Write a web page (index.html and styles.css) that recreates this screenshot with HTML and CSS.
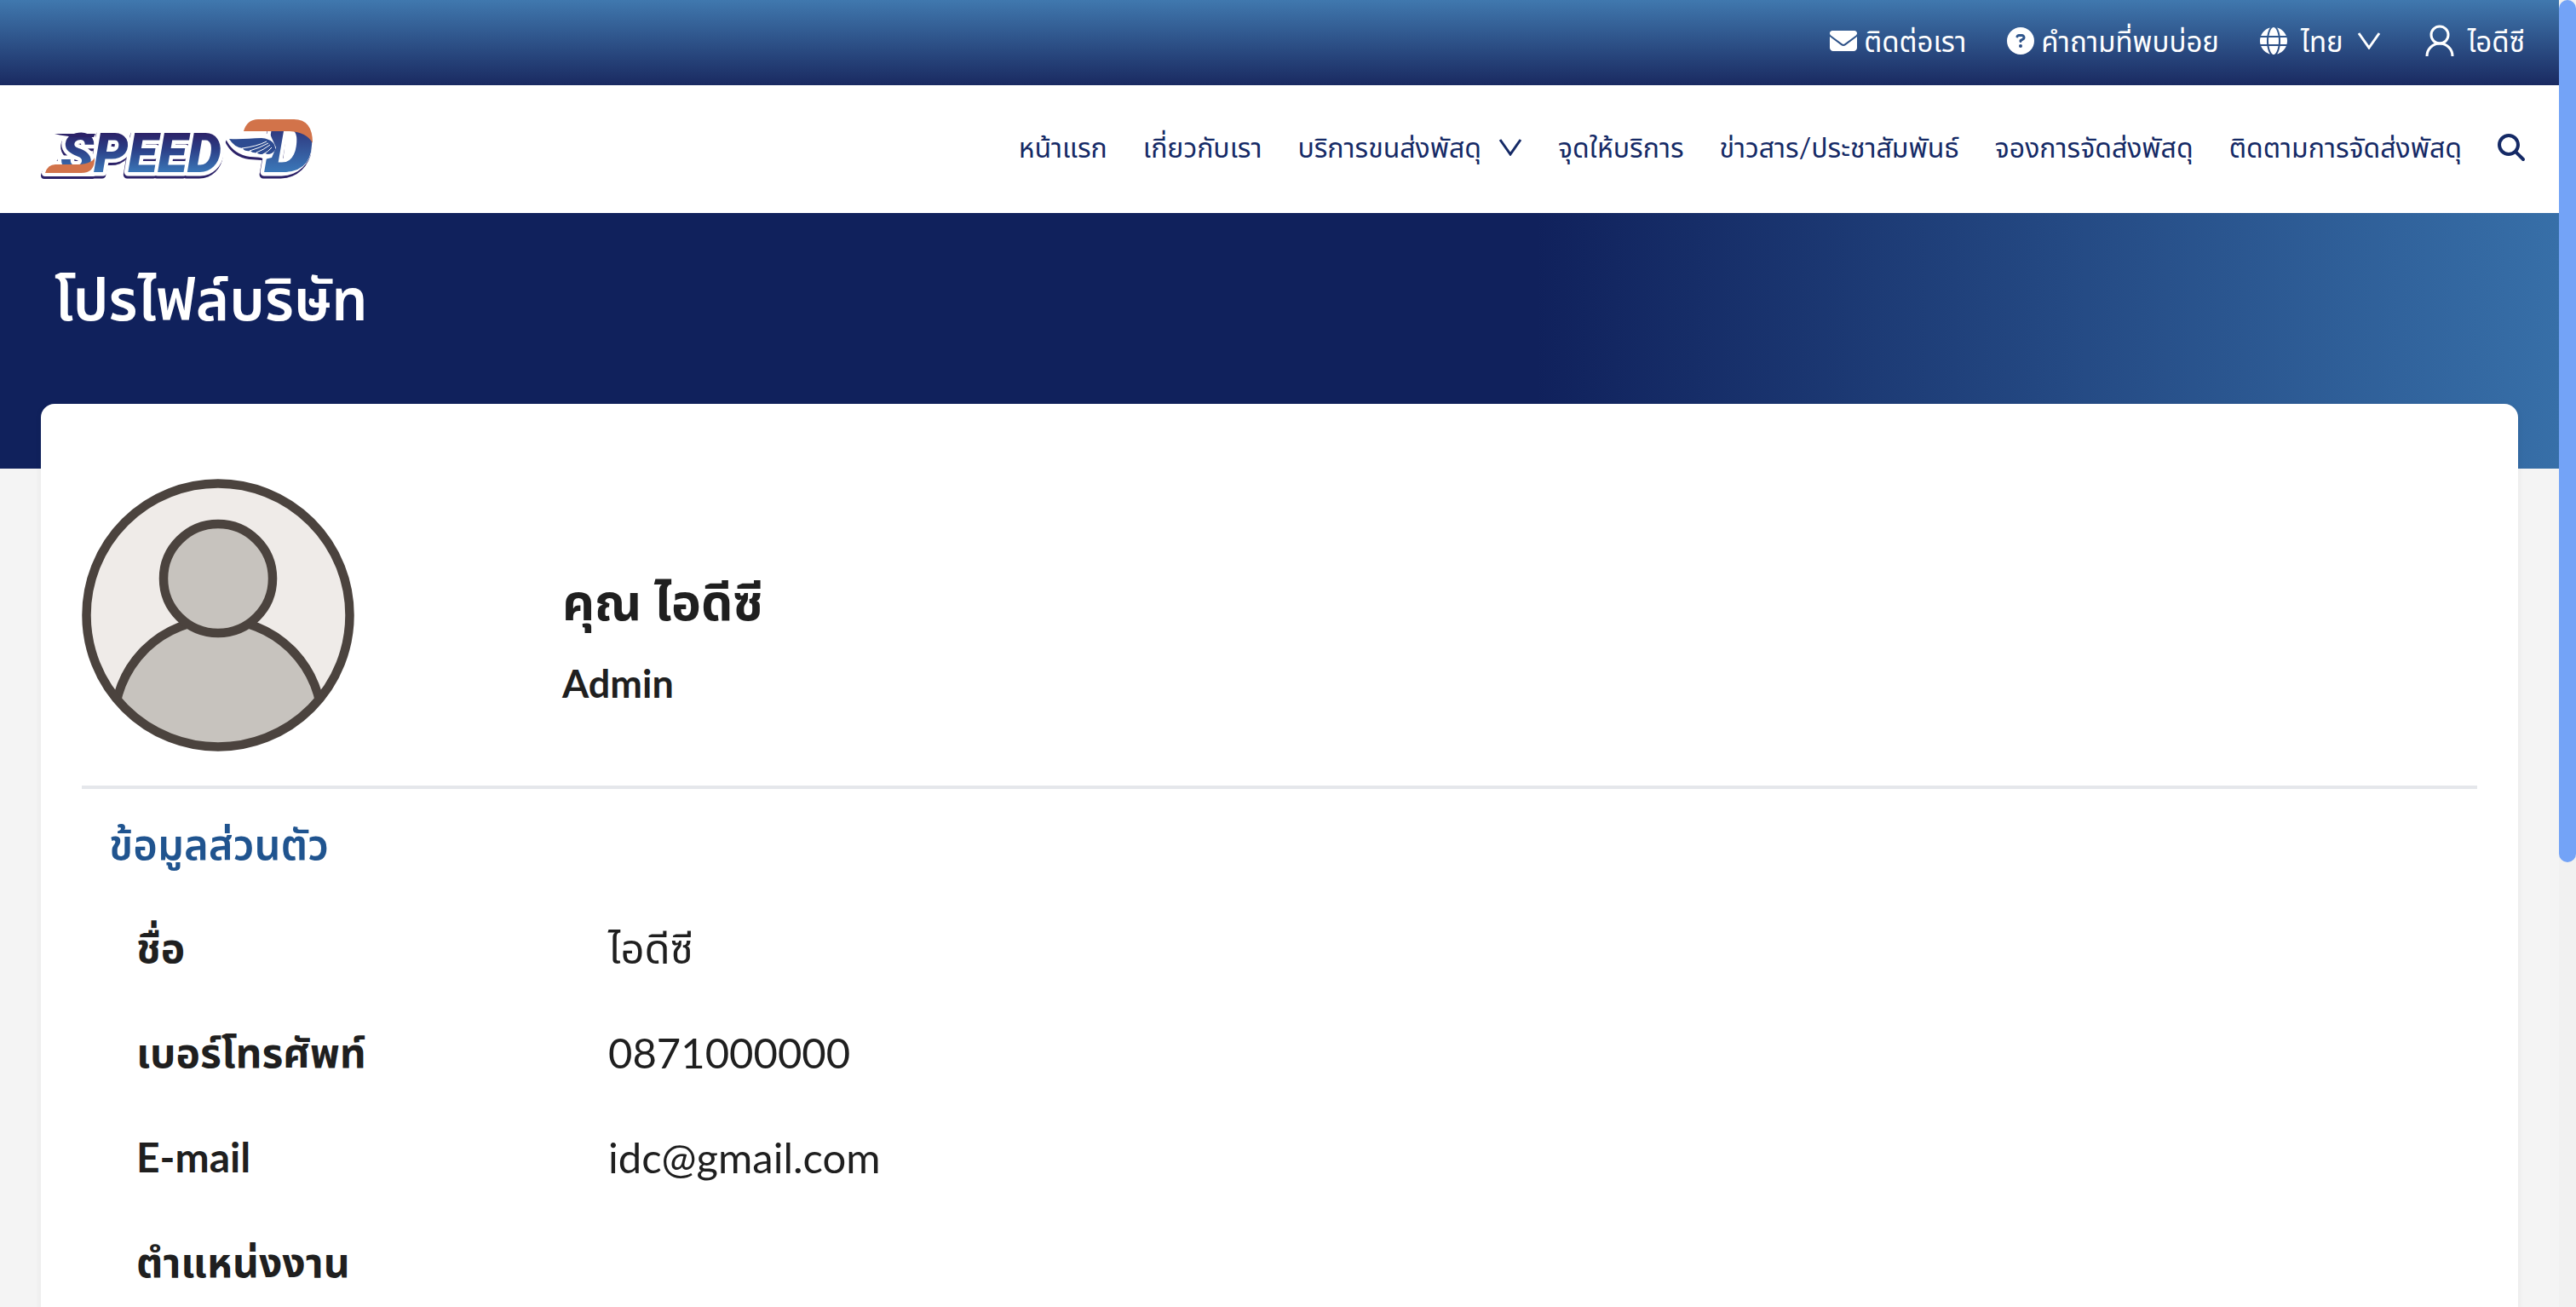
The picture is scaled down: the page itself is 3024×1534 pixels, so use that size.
FILE: index.html
```html
<!DOCTYPE html>
<html lang="th">
<head>
<meta charset="utf-8">
<meta name="viewport" content="width=device-width, initial-scale=1">
<title>โปรไฟล์บริษัท | SPEED-D</title>
<link rel="stylesheet" href="styles.css">
</head>
<body>
<div class="topbar">
  <a class="topbar-link" href="#contact">
    <svg class="icon-solid" viewBox="0 0 512 512" aria-hidden="true"><path d="M48 64C21.500 64 0 85.500 0 112c0 15.100 7.100 29.300 19.200 38.400L236.800 313.600c11.400 8.500 27 8.500 38.400 0L492.800 150.400c12.100-9.100 19.200-23.300 19.200-38.400 0-26.500-21.500-48-48-48H48zM0 176V384c0 35.300 28.700 64 64 64H448c35.300 0 64-28.700 64-64V176L294.400 339.200c-22.800 17.100-54 17.100-76.800 0L0 176z"/></svg>
    <span>ติดต่อเรา</span>
  </a>
  <a class="topbar-link" href="#faq">
    <svg class="icon-solid" viewBox="0 0 512 512" aria-hidden="true"><path d="M256 512A256 256 0 1 0 256 0a256 256 0 1 0 0 512zM169.800 165.300c7.900-22.300 29.100-37.300 52.800-37.300h58.300c34.900 0 63.100 28.300 63.100 63.100 0 22.600-12.100 43.500-31.700 54.800L280 264.400c-.2 13-10.900 23.600-24 23.600-13.300 0-24-10.700-24-24v-13.500c0-8.600 4.600-16.500 12.100-20.800l44.300-25.400c4.700-2.700 7.600-7.700 7.600-13.100 0-8.400-6.800-15.100-15.100-15.100h-58.300c-3.400 0-6.400 2.100-7.500 5.300l-.4 1.200c-4.400 12.500-18.200 19-30.600 14.600s-19-18.200-14.600-30.600l.3-1.300zM224 352a32 32 0 1 1 64 0 32 32 0 1 1-64 0z"/></svg>
    <span>คำถามที่พบบ่อย</span>
  </a>
  <button class="topbar-link topbar-lang" type="button">
    <svg class="icon-solid" viewBox="0 0 512 512" aria-hidden="true"><path d="M352 256c0 22.200-1.200 43.600-3.300 64H163.300c-2.200-20.400-3.300-41.800-3.300-64s1.200-43.600 3.300-64H348.700c2.200 20.400 3.300 41.800 3.300 64zm28.800-64H503.900c5.300 20.500 8.100 41.900 8.100 64s-2.800 43.500-8.100 64H380.800c2.100-20.600 3.200-42 3.200-64s-1.100-43.400-3.200-64zm112.600-32H376.700c-10-63.900-29.800-117.400-55.300-151.600C399.800 29.100 463.400 85.300 493.400 160zm-149.100 0H167.700c6.100-36.400 15.500-68.600 27-94.700 10.500-23.600 22.200-40.700 33.500-51.500C239.400 3.200 248.700 0 256 0s16.600 3.200 27.800 13.800c11.300 10.800 23 27.900 33.500 51.500 11.600 26 20.900 58.200 27 94.700zm-209 0H18.600C48.600 85.300 112.200 29.100 190.600 8.400 165.100 42.600 145.300 96.100 135.300 160zM8.100 192H131.200c-2.100 20.600-3.200 42-3.200 64s1.100 43.400 3.200 64H8.100C2.800 299.500 0 278.100 0 256s2.800-43.500 8.100-64zM194.700 446.600c-11.600-26-20.900-58.200-27-94.600H344.300c-6.100 36.400-15.500 68.600-27 94.600-10.500 23.600-22.200 40.700-33.500 51.500C272.600 508.800 263.300 512 256 512s-16.600-3.200-27.800-13.800c-11.300-10.800-23-27.900-33.500-51.600zM135.300 352c10 63.900 29.800 117.400 55.300 151.600C112.200 482.900 48.600 426.700 18.600 352H135.300zm358.100 0c-30 74.700-93.600 130.900-171.900 151.600 25.500-34.200 45.200-87.700 55.300-151.600H493.400z"/></svg>
    <span>ไทย</span>
    <svg class="chevron" viewBox="0 0 28 20" aria-hidden="true"><path d="M2 1 14 18 26 1"/></svg>
  </button>
  <a class="topbar-link topbar-user" href="#profile">
    <svg class="icon-user" viewBox="0 0 34 38" aria-hidden="true"><circle cx="17" cy="12" r="10"/><path d="M2 37a15 15 0 0 1 30 0"/></svg>
    <span>ไอดีซี</span>
  </a>
</div>

<header class="header">
  <a class="logo" href="#home" aria-label="SPEED-D">
    <svg class="logo-art" viewBox="44 130 332 90" aria-hidden="true">
      <defs>
        <linearGradient id="blue" x1="0" y1="156" x2="0" y2="203" gradientUnits="userSpaceOnUse"><stop offset="0" stop-color="#2c2268"/><stop offset=".4" stop-color="#2b3e86"/><stop offset="1" stop-color="#3b78b9"/></linearGradient>
        <linearGradient id="emblem" x1="0" y1="140" x2="0" y2="202" gradientUnits="userSpaceOnUse"><stop offset=".22" stop-color="#d2734a"/><stop offset=".22" stop-color="#2f3a80"/><stop offset="1" stop-color="#3b78b9"/></linearGradient>
      </defs>
      <g class="logo-raised">
        <path class="logo-base" d="M53 203q3-10 12-10h40l4 10zM237 170h10v20h-12zM270 164h46v16l-8 1-14-1q-16-2-24-16z"/>
        <path fill="#fff" d="M336 156h14v34h-18z"/>
        <text class="logo-word" x="71" y="202" fill="url(#blue)">SPEED</text>
        <text class="logo-initial" x="310" y="202" fill="url(#emblem)">D</text>
        <path fill="url(#emblem)" d="M352 156l14 4q3 40-31 42h-6q25-10 23-46z"/>
      </g>
      <path fill="#2c2268" d="M64 157h48l-2 4H92q-16-1-28-4z"/>
      <path fill="#d2734a" d="M53 203q3-10 12-10h27q16-1 19-8 1 18-16 18z"/>
      <path fill="#d2734a" d="M286 154q4-14 17-14h42q22 0 22 28-7-13-27-14z"/>
      <path fill="#fff" d="M268 157h49l2 5 5 11-5 12-8 2-23-9z"/>
      <path fill="#2d4b91" d="M269 163c15 1 25-1 38-1 12 1 17 7 16 14q-3 5-9 5-4-2-6 0-6 0-6-2-6 1-8-2-7 1-9-3-10-1-16-11z"/>
      <path class="logo-feather" d="M284 174q17-2 29-8M293 177q11-3 22-9M301 179q8-3 16-9M309 181q6-3 10-8"/>
    </svg>
  </a>
  <nav class="nav">
    <a href="#home">หน้าแรก</a>
    <a href="#about">เกี่ยวกับเรา</a>
    <a href="#services">บริการขนส่งพัสดุ <svg class="chevron" viewBox="0 0 28 20" aria-hidden="true"><path d="M2 1 14 18 26 1"/></svg></a>
    <a href="#points">จุดให้บริการ</a>
    <a href="#news">ข่าวสาร/ประชาสัมพันธ์</a>
    <a href="#booking">จองการจัดส่งพัสดุ</a>
    <a href="#tracking">ติดตามการจัดส่งพัสดุ</a>
    <button class="search" type="button" aria-label="ค้นหา"><svg class="icon-solid" viewBox="0 0 512 512" aria-hidden="true"><path d="M416 208c0 45.900-14.900 88.300-40 122.700L502.600 457.400c12.500 12.500 12.500 32.800 0 45.300s-32.800 12.500-45.300 0L330.700 376c-34.400 25.200-76.800 40-122.700 40C93.100 416 0 322.900 0 208S93.100 0 208 0s208 93.100 208 208zM208 352a144 144 0 1 0 0-288 144 144 0 1 0 0 288z"/></svg></button>
  </nav>
</header>

<section class="hero"><h1>โปรไฟล์บริษัท</h1></section>

<main class="card">
  <section class="profile">
    <svg class="avatar" viewBox="0 0 320 320" role="img" aria-label="รูปโปรไฟล์">
      <clipPath id="round"><circle cx="160" cy="160" r="155"/></clipPath>
      <circle cx="160" cy="160" r="155" fill="#efebe8"/>
      <g fill="#c7c3be" stroke="#4b433e" stroke-width="10.500"><circle cx="160" cy="287" r="122" clip-path="url(#round)"/><circle cx="160" cy="117" r="64"/><circle cx="160" cy="160" r="154.500" fill="none"/></g>
    </svg>
    <div class="profile-text">
      <h2>คุณ ไอดีซี</h2>
      <p>Admin</p>
    </div>
  </section>
  <section class="details">
    <h3>ข้อมูลส่วนตัว</h3>
    <dl>
      <div class="field"><dt>ชื่อ</dt><dd>ไอดีซี</dd></div>
      <div class="field"><dt>เบอร์โทรศัพท์</dt><dd>0871000000</dd></div>
      <div class="field"><dt>E-mail</dt><dd>idc@gmail.com</dd></div>
      <div class="field"><dt>ตำแหน่งงาน</dt><dd></dd></div>
    </dl>
  </section>
</main>
<div class="scrollbar" aria-hidden="true"><div class="scrollbar-thumb"></div></div>
</body>
</html>
```

FILE: styles.css
```css
* { box-sizing: border-box; margin: 0; padding: 0; }
html { scrollbar-width: none; }
body {
  padding-right: 20px;
  background: #f4f4f4;
  color: #1f1f1f;
  font-family: Lato, "Noto Sans Thai", "Noto Sans", sans-serif;
  font-size: 32px;
  line-height: 48px;
}
a { color: inherit; text-decoration: none; }
button { border: 0; background: none; color: inherit; font: inherit; cursor: pointer; }
.icon-solid { width: 32px; height: 32px; fill: currentColor; flex: none; }
.chevron { width: 28px; height: 20px; fill: none; stroke: currentColor; stroke-width: 3; flex: none; }

.topbar {
  display: flex;
  justify-content: flex-end;
  align-items: center;
  gap: 48px;
  height: 100px;
  padding: 0 40px 4px;
  background: linear-gradient(#4078ae, #1a2a61);
  color: #fff;
  font-size: 33px;
}
.topbar-link { display: flex; align-items: center; gap: 8px; }
.topbar-lang { gap: 16px; }
.topbar-user { gap: 16px; padding-left: 4px; }
.icon-user { width: 34px; height: 38px; fill: none; stroke: currentColor; stroke-width: 3; }

.header {
  display: flex;
  align-items: center;
  justify-content: space-between;
  height: 150px;
  padding: 0 40px 0 44px;
  background: #fff;
  color: #152a66;
}
.logo-art { display: block; width: 332px; height: 90px; overflow: visible; }
.logo-raised { filter: drop-shadow(-1px 3px 0 #2c2268); }
.logo-base { fill: #fff; stroke: #fff; stroke-width: 8; stroke-linejoin: round; }
.logo-word, .logo-initial {
  font-family: Roboto, sans-serif;
  font-weight: 900;
  font-style: italic;
  font-size: 64px;
  stroke: #fff;
  stroke-width: 9;
  stroke-linejoin: round;
  paint-order: stroke;
}
.logo-initial { font-size: 87px; }
.logo-feather { fill: none; stroke: #fff; stroke-width: 1; }

.nav { display: flex; align-items: center; gap: 42px; padding-bottom: 4px; white-space: nowrap; }
.nav a { display: flex; align-items: center; gap: 20px; }
.search { display: flex; }

.hero {
  height: 300px;
  padding: 52px 64px;
  background: linear-gradient(90deg, #10215c 60%, #376fa8);
  color: #fff;
}
.hero h1 { font-size: 67px; font-weight: 600; line-height: 96px; }

.card {
  margin: -76px 48px 0;
  min-height: 1200px;
  padding: 88px 48px 48px;
  border-radius: 16px;
  background: #fff;
  box-shadow: 0 2px 8px rgba(0, 0, 0, .06);
  position: relative;
}
.profile { display: flex; gap: 244px; padding-bottom: 40px; border-bottom: 4px solid #e5e7eb; }
.avatar { width: 320px; height: 320px; flex: none; }
.profile-text { padding-top: 100px; }
.profile-text h2 { font-size: 59px; font-weight: 700; line-height: 88px; }
.profile-text p { font-size: 45px; font-weight: 700; line-height: 64px; padding-top: 20px; }
.details { padding: 28px 32px; font-size: 49px; line-height: 72px; }
.details h3 { color: #20548f; font-size: 49px; font-weight: 600; }
.details dl { padding: 50px 32px 0; }
.field { display: grid; grid-template-columns: 554px 1fr; padding-bottom: 51px; }
.field dt { font-size: 48px; font-weight: 700; }

.scrollbar { position: fixed; top: 0; right: 0; bottom: 0; width: 20px; background: #f1f1f1; }
.scrollbar-thumb { height: 66%; border-radius: 10px; background: #73a3f7; }
```
